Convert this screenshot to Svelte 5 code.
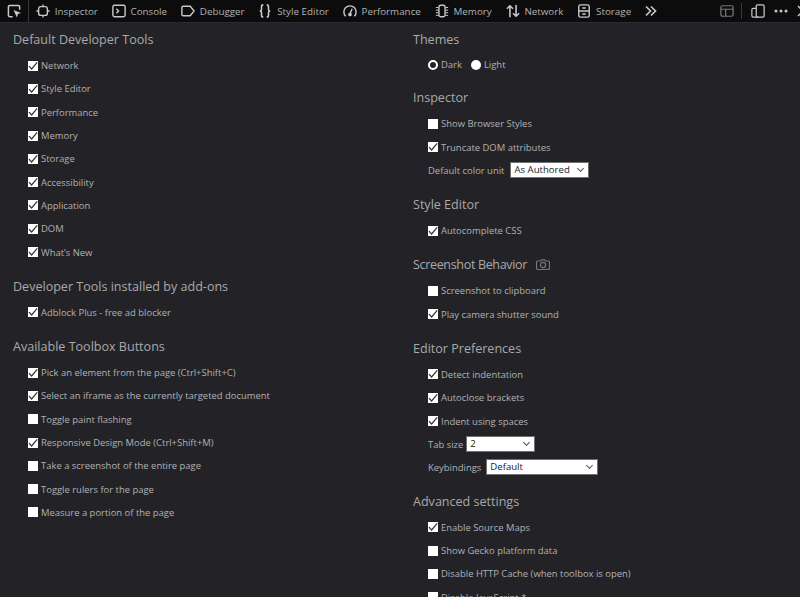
<script>
  const tabs = [
    { label: 'Inspector', icon: 'inspector' },
    { label: 'Console', icon: 'console' },
    { label: 'Debugger', icon: 'debugger' },
    { label: 'Style Editor', icon: 'style' },
    { label: 'Performance', icon: 'perf' },
    { label: 'Memory', icon: 'memory' },
    { label: 'Network', icon: 'network' },
    { label: 'Storage', icon: 'storage' },
  ];

  const defaultTools = [
    ['Network', true], ['Style Editor', true], ['Performance', true], ['Memory', true], ['Storage', true],
    ['Accessibility', true], ['Application', true], ['DOM', true], ['What’s New', true],
  ];
  const addons = [['Adblock Plus - free ad blocker', true]];
  const buttons = [
    ['Pick an element from the page (Ctrl+Shift+C)', true],
    ['Select an iframe as the currently targeted document', true],
    ['Toggle paint flashing', false],
    ['Responsive Design Mode (Ctrl+Shift+M)', true],
    ['Take a screenshot of the entire page', false],
    ['Toggle rulers for the page', false],
    ['Measure a portion of the page', false],
  ];
</script>

{#snippet check(label, on)}
  <label class="row">
    <span class="box">
      {#if on}
        <svg viewBox="0 0 10 10" width="10" height="10"><path d="M1 5.200 3.600 8 9.200 1.400" fill="none" stroke="#333" stroke-width="1.200"/></svg>
      {/if}
    </span>
    <span>{label}</span>
  </label>
{/snippet}

{#snippet tabIcon(name)}
  <svg class="ico" viewBox="0 0 16 16" width="14" height="14" fill="none" stroke="#c8c8ca" stroke-width="1.600">
    {#if name === 'inspector'}
      <rect x="3" y="3" width="10" height="10" rx="2.500"/><path d="M8 0.500V3M8 13v2.500M0.500 8H3M13 8h2.500"/>
    {:else if name === 'console'}
      <rect x="1" y="1.500" width="14" height="13" rx="2"/><path d="m5 5.500 2.500 2.500L5 10.500"/>
    {:else if name === 'debugger'}
      <path d="M2.500 2.500h8l4.500 5.500-4.500 5.500h-8A1.500 1.500 0 0 1 1 12V4a1.500 1.500 0 0 1 1.500-1.500Z"/>
    {:else if name === 'style'}
      <path d="M6 1C4 1 4 2 4 3.500v2.700C4 7.500 3.500 8 2 8c1.500 0 2 .5 2 1.800v2.700C4 14 4 15 6 15M10 1c2 0 2 1 2 2.500v2.700c0 1.300.5 1.800 2 1.800-1.500 0-2 .5-2 1.800v2.700c0 1.500 0 2.500-2 2.500" stroke-width="1.800"/>
    {:else if name === 'perf'}
      <path d="M3 14A7 7 0 1 1 13 14"/><path d="M8 11 10.500 5.500"/><circle cx="8" cy="12" r="1.300" fill="#c8c8ca"/>
    {:else if name === 'memory'}
      <rect x="4.500" y="1.500" width="7" height="13" rx="2"/><path d="M1 4h3M1 7h3M1 10h3M1 13h3M12 4h3M12 7h3M12 10h3M12 13h3" stroke-width="1.100"/>
    {:else if name === 'network'}
      <path d="M4.500 15V2M1 5.500 4.500 2 8 5.500M11.500 1v13M8 10.500l3.500 3.500 3.500-3.500" stroke-width="1.800"/>
    {:else}
      <rect x="2" y="1" width="12" height="14" rx="2"/><path d="M2 8h12M6 4.500h4M6 11.500h4"/>
    {/if}
  </svg>
{/snippet}

<div class="page">
  <header class="toolbar">
    <div class="picker">
      <svg viewBox="0 0 16 16" width="15" height="15" fill="none" stroke="#c8c8ca" stroke-width="1.600">
        <path d="M6 13.500H3A1.500 1.500 0 0 1 1.500 12V3A1.500 1.500 0 0 1 3 1.500h9A1.500 1.500 0 0 1 13.500 3v3"/>
        <path d="m7 6.500 8 3-3.300 1.200L10.500 14.500Z" fill="#c8c8ca" stroke="none"/>
      </svg>
    </div>
    <nav class="tabs">
      {#each tabs as t}
        <div class="tab">{@render tabIcon(t.icon)}<span>{t.label}</span></div>
      {/each}
      <svg class="more" viewBox="0 0 12 12" width="12" height="12" fill="none" stroke="#c8c8ca" stroke-width="1.700">
        <path d="m1 1.500 4.500 4.500L1 10.500M6 1.500l4.500 4.500L6 10.500"/>
      </svg>
    </nav>
    <div class="side">
      <svg class="layout" viewBox="0 0 16 16" width="14" height="14" fill="none" stroke="#77777a" stroke-width="1.400">
        <rect x="1" y="2" width="14" height="12" rx="2"/><path d="M1 6h14M6.500 6v8"/>
      </svg>
      <i class="sep"></i>
      <svg viewBox="0 0 16 16" width="14" height="14" fill="none" stroke="#c8c8ca" stroke-width="1.400">
        <rect x="6" y="1" width="9" height="14" rx="1.500"/><path d="M6 5H2.500A1.500 1.500 0 0 0 1 6.500V13.500A1.500 1.500 0 0 0 2.500 15H8"/>
      </svg>
      <svg viewBox="0 0 14 14" width="14" height="14" fill="#c8c8ca">
        <circle cx="2" cy="7" r="1.500"/><circle cx="7" cy="7" r="1.500"/><circle cx="12" cy="7" r="1.500"/>
      </svg>
      <svg class="close" viewBox="0 0 12 12" width="12" height="12" fill="none" stroke="#c8c8ca" stroke-width="1.500">
        <path d="m1 1 10 10M11 1 1 11"/>
      </svg>
    </div>
  </header>

  <main class="content">
    <div class="col">
      <section>
        <h2>Default Developer Tools</h2>
        {#each defaultTools as [l, on]}{@render check(l, on)}{/each}
      </section>
      <section>
        <h2>Developer Tools installed by add-ons</h2>
        {#each addons as [l, on]}{@render check(l, on)}{/each}
      </section>
      <section>
        <h2>Available Toolbox Buttons</h2>
        {#each buttons as [l, on]}{@render check(l, on)}{/each}
      </section>
    </div>

    <div class="col">
      <section>
        <h2>Themes</h2>
        <div class="row radios">
          <span class="radio on"></span><span>Dark</span>
          <span class="radio"></span><span>Light</span>
        </div>
      </section>
      <section>
        <h2>Inspector</h2>
        {@render check('Show Browser Styles', false)}
        {@render check('Truncate DOM attributes', true)}
        <div class="field"><span>Default color unit</span><div class="select w-unit">As Authored</div></div>
      </section>
      <section>
        <h2>Style Editor</h2>
        {@render check('Autocomplete CSS', true)}
      </section>
      <section>
        <h2 class="tight">Screenshot Behavior
          <svg viewBox="0 0 14 11" width="14" height="11" fill="none" stroke="#77777a" stroke-width="1.200">
            <path d="M2 2h2.500l1-1.200h3l1 1.200H12a1.500 1.500 0 0 1 1.500 1.500v5.500A1.500 1.500 0 0 1 12 10.500H2A1.500 1.500 0 0 1 .5 9V3.500A1.500 1.500 0 0 1 2 2Z"/><circle cx="7" cy="6" r="2.600"/>
          </svg>
        </h2>
        {@render check('Screenshot to clipboard', false)}
        {@render check('Play camera shutter sound', true)}
      </section>
      <section>
        <h2>Editor Preferences</h2>
        {@render check('Detect indentation', true)}
        {@render check('Autoclose brackets', true)}
        {@render check('Indent using spaces', true)}
        <div class="field"><span>Tab size</span><div class="select w-tab">2</div></div>
        <div class="field"><span>Keybindings</span><div class="select w-keys">Default</div></div>
      </section>
      <section>
        <h2>Advanced settings</h2>
        {@render check('Enable Source Maps', true)}
        {@render check('Show Gecko platform data', false)}
        {@render check('Disable HTTP Cache (when toolbox is open)', false)}
        {@render check('Disable JavaScript *', false)}
      </section>
    </div>
  </main>
</div>

<style>
  :global(body) {
    margin: 0;
    background: #232327;
  }

  .page {
    width: 800px;
    height: 597px;
    overflow: hidden;
    background: #232327;
    color: #b1b1b3;
    font-family: "Open Sans", sans-serif;
    font-size: 9.450px;
  }

  .toolbar {
    display: flex;
    align-items: center;
    height: 22px;
    background: #0c0c0d;
    border-bottom: 1px solid #2c2c30;
    font-size: 9.800px;
  }

  .picker {
    display: flex;
    width: 29px;
    height: 22px;
    align-items: center;
    padding-left: 7px;
    box-sizing: border-box;
    border-right: 1px solid #38383d;
  }

  .tabs {
    display: flex;
    align-items: center;
    gap: 13.900px;
    padding-left: 7px;
    flex: 1;
  }

  .tab {
    display: flex;
    align-items: center;
    gap: 4.800px;
    white-space: nowrap;
  }

  .side {
    display: flex;
    align-items: center;
    gap: 9px;
  }

  .layout {
    margin-right: -2px;
  }

  .sep {
    width: 1px;
    height: 16px;
    background: #38383d;
  }

  .close {
    margin-right: -9px;
  }

  .content {
    display: grid;
    grid-template-columns: 400px 400px;
  }

  .col {
    padding: 8px 0 0 13px;
  }

  section {
    margin-bottom: 14px;
  }

  h2 {
    display: flex;
    align-items: center;
    gap: 3px;
    margin: 0 0 6px;
    font-size: 12.550px;
    line-height: 17px;
    font-weight: 400;
    color: #a9a9ab;
  }

  .tight {
    letter-spacing: -0.35px;
    gap: 9px;
  }

  .row {
    display: flex;
    align-items: center;
    gap: 3px;
    height: 23.300px;
    padding-left: 15px;
    white-space: nowrap;
  }

  .box {
    display: flex;
    align-items: center;
    justify-content: center;
    width: 10px;
    height: 10px;
    background: #fff;
  }

  .radios {
    height: 21.300px;
  }

  .radio {
    width: 10px;
    height: 10px;
    border-radius: 50%;
    background: #fff;
    box-sizing: border-box;
  }

  .radio.on {
    border: 2.500px solid #fff;
    background: #232327;
  }

  .radio:not(.on) {
    margin-left: 6px;
  }

  .field {
    display: flex;
    align-items: center;
    gap: 5px;
    height: 23px;
    padding-left: 15px;
  }

  .select {
    height: 16px;
    line-height: 14px;
    box-sizing: border-box;
    padding-left: 3px;
    background: #fff;
    border: 1px solid #707073;
    color: #222;
    position: relative;
    font-size: 9.600px;
  }

  .select::after {
    content: "";
    position: absolute;
    right: 5px;
    top: 3px;
    width: 4px;
    height: 4px;
    border-right: 1px solid #555;
    border-bottom: 1px solid #555;
    transform: rotate(45deg);
  }

  .w-unit { width: 79px; margin-left: 1px; }
  .w-tab { width: 69px; margin-left: -2px; }
  .w-keys { width: 112px; }
</style>
